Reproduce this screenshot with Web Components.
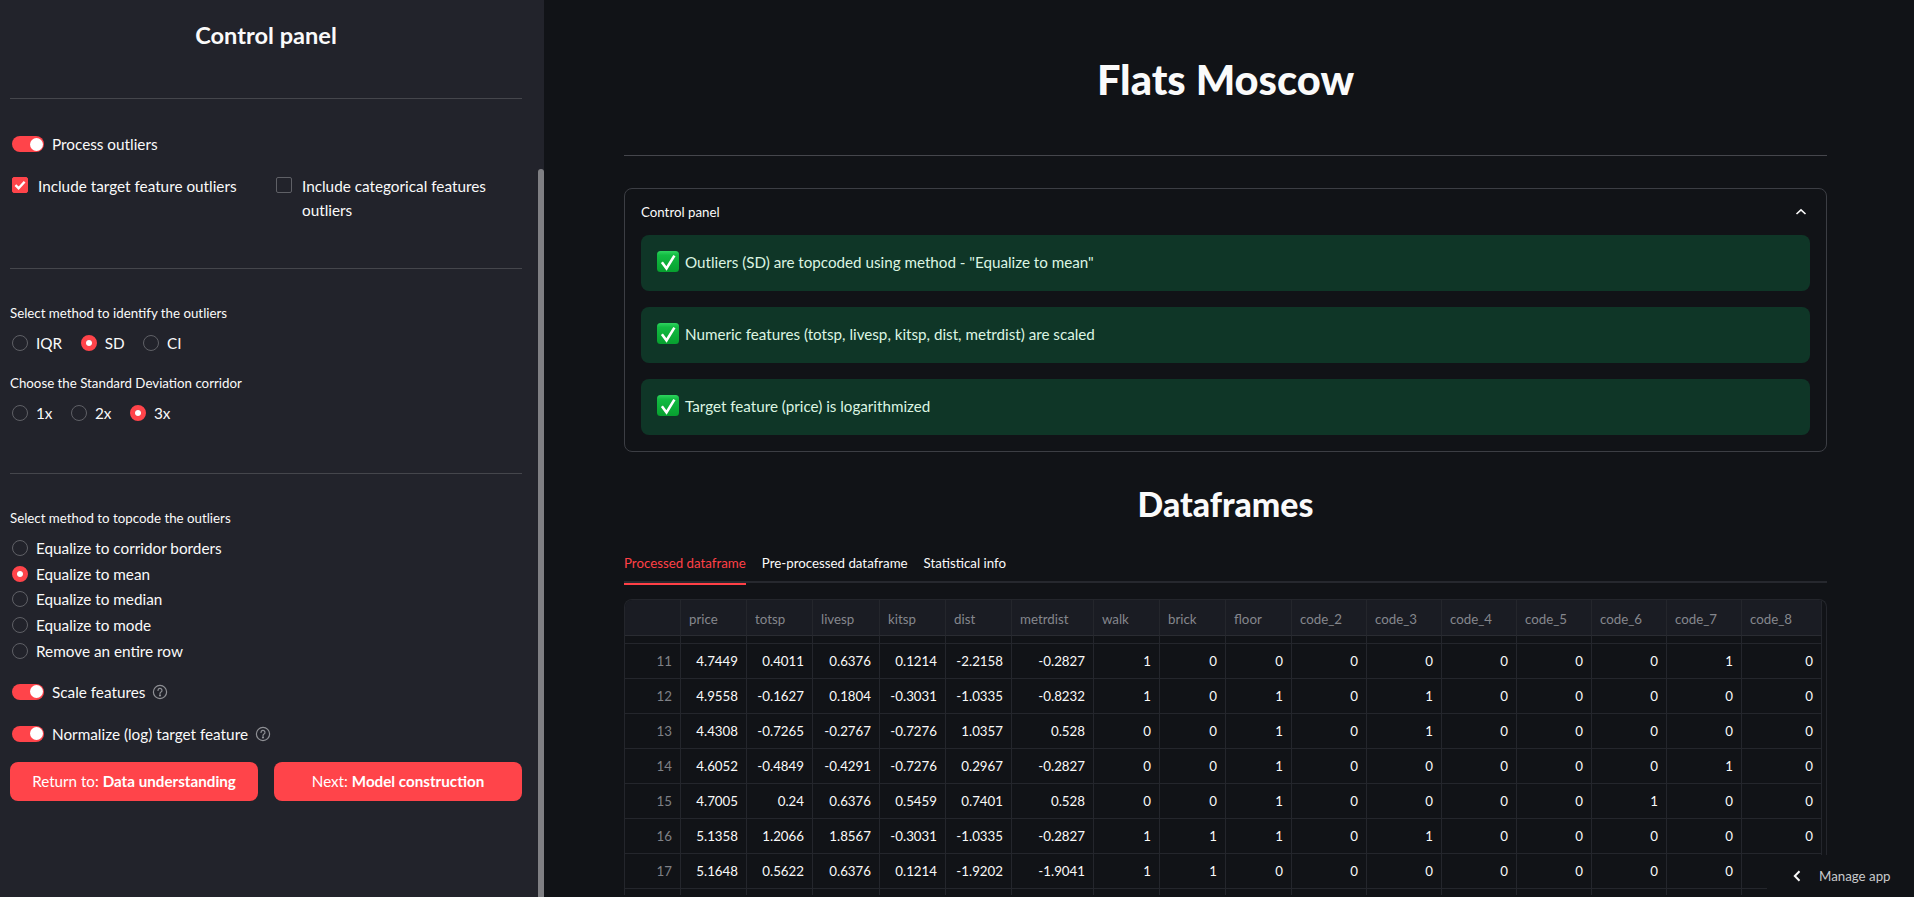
<!DOCTYPE html>
<html>
<head>
<meta charset="utf-8">
<title>Flats Moscow</title>
<style>
  html, body { margin: 0; height: 100%; overflow: hidden; background: #111317; }
  body { font-family: Lato, "Noto Sans", sans-serif; color: #fafafa; }
</style>
</head>
<body>
<flats-app>
  <app-sidebar slot="sidebar">
    <panel-title>Control panel</panel-title>
    <st-divider style="margin-top:28px"></st-divider>
    <st-toggle style="margin-top:33px">Process outliers</st-toggle>
    <check-row style="margin-top:18px">
      <st-checkbox checked>Include target feature outliers</st-checkbox>
      <st-checkbox>Include categorical features outliers</st-checkbox>
    </check-row>
    <st-divider style="margin-top:46px"></st-divider>
    <st-radio-group style="margin-top:34px" label="Select method to identify the outliers" options="IQR|SD|CI" selected="SD"></st-radio-group>
    <st-radio-group style="margin-top:18px" label="Choose the Standard Deviation corridor" options="1x|2x|3x" selected="3x"></st-radio-group>
    <st-divider style="margin-top:48px"></st-divider>
    <st-radio-group style="margin-top:34px" vertical label="Select method to topcode the outliers" options="Equalize to corridor borders|Equalize to mean|Equalize to median|Equalize to mode|Remove an entire row" selected="Equalize to mean"></st-radio-group>
    <st-toggle style="margin-top:16.5px" help>Scale features</st-toggle>
    <st-toggle style="margin-top:18px" help>Normalize (log) target feature</st-toggle>
    <button-row style="margin-top:16px">
      <st-button>Return to: <b>Data understanding</b></st-button>
      <st-button>Next: <b>Model construction</b></st-button>
    </button-row>
  </app-sidebar>

  <page-heading level="1">Flats Moscow</page-heading>
  <st-divider style="margin-top:36px"></st-divider>
  <st-expander style="margin-top:32px" title="Control panel">
    <st-alert>Outliers (SD) are topcoded using method - "Equalize to mean"</st-alert>
    <st-alert>Numeric features (totsp, livesp, kitsp, dist, metrdist) are scaled</st-alert>
    <st-alert>Target feature (price) is logarithmized</st-alert>
  </st-expander>
  <page-heading level="2" style="margin-top:24px">Dataframes</page-heading>
  <st-tabs style="margin-top:13px" tabs="Processed dataframe|Pre-processed dataframe|Statistical info"></st-tabs>
  <data-grid style="margin-top:16px"></data-grid>
  <manage-badge slot="overlay"></manage-badge>
</flats-app>

<script>
  const define = (name, css, html, setup) => {
    const template = document.createElement("template");
    template.innerHTML = `<style>${css}</style>${html}`;
    customElements.define(name, class extends HTMLElement {
      constructor() {
        super();
        this.attachShadow({ mode: "open" });
        this.shadowRoot.appendChild(template.content.cloneNode(true));
      }
      connectedCallback() {
        if (setup) setup(this, this.shadowRoot);
      }
    });
  };

  define("flats-app", `
    :host { display: flex; height: 897px; overflow: hidden; position: relative; background: #111317; }
    main { flex: 1; min-width: 0; padding: 39px 87px 0 80px; overflow: hidden; }
  `, `<slot name="sidebar"></slot><main><slot></slot></main><slot name="overlay"></slot>`);

  define("app-sidebar", `
    :host { display: block; width: 544px; height: 897px; flex: none; box-sizing: border-box; padding: 0 22px 0 10px; background: #22232b; position: relative; overflow: hidden; }
    .thumb { position: absolute; right: 0; top: 169px; bottom: 0; width: 6px; border-radius: 3px 3px 0 0; background: #7f7f83; }
  `, `<slot></slot><div class="thumb"></div>`);

  define("panel-title", `
    :host { display: block; height: 70px; line-height: 70px; text-align: center; font-size: 23.6px; font-weight: 700; }
  `, `<slot></slot>`);

  define("st-divider", `
    :host { display: block; height: 1px; background: #45464c; }
  `, ``);

  const helpIcon = `<svg class="help" width="16" height="16" viewBox="0 0 16 16" fill="none" stroke="#8f9095" stroke-width="1.2"><circle cx="8" cy="8" r="6.6"/><path d="M6 6.4a2 2 0 1 1 3 1.7c-.7.4-1 .8-1 1.5" stroke-linecap="round"/><circle cx="8" cy="11.4" r=".5" fill="#8f9095"/></svg>`;

  define("st-toggle", `
    :host { display: flex; align-items: center; height: 24px; padding-left: 2px; font-size: 15.3px; }
    .track { width: 32px; height: 16px; border-radius: 8px; background: #ff444a; position: relative; flex: none; margin-right: 8px; }
    .knob { position: absolute; right: 1.5px; top: 1.5px; width: 13px; height: 13px; border-radius: 50%; background: #fff; }
    .help-slot { display: flex; margin-left: 7px; color: #8f9095; }
  `, `<span class="track"><span class="knob"></span></span><slot></slot><span class="help-slot"></span>`,
  (el, root) => {
    if (el.hasAttribute("help")) root.querySelector(".help-slot").innerHTML = helpIcon;
  });

  define("check-row", `
    :host { display: grid; grid-template-columns: 248px 248px; column-gap: 16px; }
  `, `<slot></slot>`);

  define("st-checkbox", `
    :host { display: flex; padding-left: 2px; font-size: 15.3px; line-height: 24px; }
    .box { width: 16px; height: 16px; margin: 3px 10px 0 0; flex: none; box-sizing: border-box; border-radius: 2px; border: 1px solid #5f6066; display: flex; }
    :host([checked]) .box { background: #ff444a; border-color: #ff444a; }
    svg { display: none; }
    :host([checked]) svg { display: block; }
  `, `<span class="box"><svg width="14" height="14" viewBox="0 0 14 14" fill="none" stroke="#fff" stroke-width="2.4"><path d="M2.4 7.2l3.2 3 6-6.4"/></svg></span><span><slot></slot></span>`);

  define("st-radio-group", `
    :host { display: block; }
    .label { font-size: 13.3px; line-height: 21px; height: 20px; }
    .options { display: flex; gap: 18.5px; margin-top: 8px; padding-left: 2px; }
    :host([vertical]) .options { flex-direction: column; gap: 0; margin-top: 7.5px; }
    .opt { display: flex; align-items: center; height: 24px; font-size: 15.3px; }
    :host([vertical]) .opt { height: 25.6px; }
    .dot { width: 16px; height: 16px; box-sizing: border-box; border-radius: 50%; border: 1px solid #5f6066; margin-right: 8px; flex: none; }
    .on .dot { background: #ff444a; border: 5px solid #ff444a; background-clip: padding-box; }
    .on .dot::after { content: ""; display: block; width: 6px; height: 6px; border-radius: 50%; background: #fff; }
  `, `<div class="label"></div><div class="options"></div>`,
  (el, root) => {
    root.querySelector(".label").textContent = el.getAttribute("label");
    const selected = el.getAttribute("selected");
    const box = root.querySelector(".options");
    el.getAttribute("options").split("|").forEach((text) => {
      const opt = document.createElement("div");
      opt.className = text === selected ? "opt on" : "opt";
      opt.innerHTML = `<span class="dot"></span><span></span>`;
      opt.lastChild.textContent = text;
      box.appendChild(opt);
    });
  });

  define("button-row", `
    :host { display: grid; grid-template-columns: 248px 248px; column-gap: 16px; }
  `, `<slot></slot>`);

  define("st-button", `
    :host { display: flex; align-items: center; justify-content: center; height: 39px; border-radius: 8px; background: #ff444a; color: #fff; font-size: 15.2px; white-space: pre; }
  `, `<div><slot></slot></div>`);

  define("page-heading", `
    :host { display: block; text-align: center; font-weight: 900; }
    :host([level="1"]) { height: 80px; line-height: 80px; font-size: 41.6px; }
    :host([level="2"]) { height: 56px; line-height: 56px; font-size: 33.8px; }
  `, `<slot></slot>`);

  define("st-expander", `
    :host { display: block; box-sizing: border-box; height: 264px; border: 1px solid #3c3e44; border-radius: 8px; }
    .head { display: flex; align-items: center; justify-content: space-between; height: 46px; padding: 0 16px; font-size: 13.3px; }
    .body { display: flex; flex-direction: column; gap: 16px; padding: 0 16px; }
  `, `<div class="head"><span class="title"></span><svg width="12" height="8" viewBox="0 0 12 8" fill="none" stroke="#fafafa" stroke-width="1.6" style="margin-right:3px"><path d="M1.5 6L6 1.8 10.5 6"/></svg></div><div class="body"><slot></slot></div>`,
  (el, root) => {
    root.querySelector(".title").textContent = el.getAttribute("title");
  });

  define("st-alert", `
    :host { display: flex; align-items: center; gap: 6px; height: 56px; padding: 0 16px; border-radius: 8px; background: #0f3627; color: #dcf5e2; font-size: 15.2px; }
    svg { flex: none; margin-top: -3px; }
    span { margin-top: -2px; }
  `, `<svg width="22" height="21" viewBox="0 0 22 21"><defs><linearGradient id="g" x1="0" y1="0" x2="0" y2="1"><stop offset="0" stop-color="#2fd45f"/><stop offset=".2" stop-color="#12bb42"/><stop offset="1" stop-color="#07a02f"/></linearGradient></defs><rect width="22" height="21" rx="3.5" fill="url(#g)"/><path d="M4.9 11.2l4.6 6.2L17.4 4.6" fill="none" stroke="#fff" stroke-width="2.6"/></svg><span><slot></slot></span>`);

  define("st-tabs", `
    :host { display: block; border-bottom: 2px solid #26282e; }
    .row { display: flex; gap: 16px; height: 38px; margin-bottom: -2px; }
    .tab { font-size: 13.3px; line-height: 36px; height: 38px; box-sizing: content-box; border-bottom: 2px solid transparent; }
    .tab.on { color: #ff4046; border-bottom-color: #ff4046; }
  `, `<div class="row"></div>`,
  (el, root) => {
    const row = root.querySelector(".row");
    el.getAttribute("tabs").split("|").forEach((text, i) => {
      const tab = document.createElement("div");
      tab.className = i === 0 ? "tab on" : "tab";
      tab.textContent = text;
      row.appendChild(tab);
    });
  });

  const gridColumns = ["", "price", "totsp", "livesp", "kitsp", "dist", "metrdist", "walk", "brick", "floor",
    "code_2", "code_3", "code_4", "code_5", "code_6", "code_7", "code_8"];
  const gridWidths = [56, 66, 66, 67, 66, 66, 82, 66, 66, 66, 75, 75, 75, 75, 75, 75, 80];
  const gridRows = [
    [11, "4.7449", "0.4011", "0.6376", "0.1214", "-2.2158", "-0.2827", 1, 0, 0, 0, 0, 0, 0, 0, 1, 0],
    [12, "4.9558", "-0.1627", "0.1804", "-0.3031", "-1.0335", "-0.8232", 1, 0, 1, 0, 1, 0, 0, 0, 0, 0],
    [13, "4.4308", "-0.7265", "-0.2767", "-0.7276", "1.0357", "0.528", 0, 0, 1, 0, 1, 0, 0, 0, 0, 0],
    [14, "4.6052", "-0.4849", "-0.4291", "-0.7276", "0.2967", "-0.2827", 0, 0, 1, 0, 0, 0, 0, 0, 1, 0],
    [15, "4.7005", "0.24", "0.6376", "0.5459", "0.7401", "0.528", 0, 0, 1, 0, 0, 0, 0, 1, 0, 0],
    [16, "5.1358", "1.2066", "1.8567", "-0.3031", "-1.0335", "-0.2827", 1, 1, 1, 0, 1, 0, 0, 0, 0, 0],
    [17, "5.1648", "0.5622", "0.6376", "0.1214", "-1.9202", "-1.9041", 1, 1, 0, 0, 0, 0, 0, 0, 0, ""],
    ["", "", "", "", "", "", "", "", "", "", "", "", "", "", "", "", ""],
  ];

  define("data-grid", `
    :host { display: block; box-sizing: border-box; height: 296px; border: 1px solid #24262c; border-bottom: 0; border-radius: 8px 8px 0 0; overflow: hidden; }
    .grid { display: grid; grid-template-columns: var(--cols); grid-auto-rows: 35px; font-size: 13.3px; }
    .cell { box-sizing: border-box; border-right: 1px solid #24262c; border-bottom: 1px solid #24262c; padding: 0 8px; line-height: 35px; text-align: right; white-space: nowrap; overflow: hidden; }
    .head { height: 36px; line-height: 38px; background: #1a1c23; color: #85878d; text-align: left; border-bottom-color: #2a2c32; }
    .stub { height: 8px; }
    .index { color: #7f8186; }
  `, `<div class="grid"></div>`,
  (el, root) => {
    const grid = root.querySelector(".grid");
    grid.style.setProperty("--cols", gridWidths.map((w) => w + "px").join(" "));
    grid.style.gridTemplateRows = "36px 8px";
    const addCell = (text, cls) => {
      const cell = document.createElement("div");
      cell.className = "cell " + cls;
      cell.textContent = text;
      grid.appendChild(cell);
    };
    gridColumns.forEach((c) => addCell(c, "head"));
    gridColumns.forEach(() => addCell("", "stub"));
    gridRows.forEach((row) => row.forEach((v, i) => addCell(v, i === 0 ? "index" : "")));
  });

  define("manage-badge", `
    :host { position: absolute; right: 0; bottom: 0; width: 147px; height: 42px; background: #111317; display: flex; align-items: center; font-size: 13.3px; color: #c9cacc; }
    svg { margin: 0 18px 0 26px; }
  `, `<svg width="8" height="12" viewBox="0 0 8 12" fill="none" stroke="#fafafa" stroke-width="2"><path d="M6.5 1.2L1.8 6l4.7 4.8"/></svg><span>Manage app</span>`);
</script>
</body>
</html>
